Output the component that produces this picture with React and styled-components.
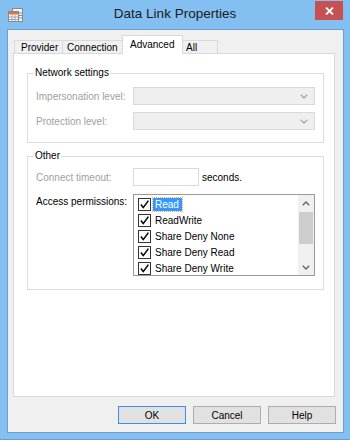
import React from "react";
import styled, { createGlobalStyle } from "styled-components";

const Global = createGlobalStyle`
	body {
		margin: 0;
		font-family: "Liberation Sans", Arial, sans-serif;
	}
	* {
		box-sizing: border-box;
	}
`;

const Window = styled.div`
	width: 350px;
	height: 440px;
	background: #84bff1;
	display: flex;
	flex-direction: column;
	border-bottom: 1px solid #6f9fc9;
`;

const TitleBar = styled.div`
	height: 30px;
	display: grid;
	grid-template-columns: 1fr auto 1fr;
	flex: none;
`;

const TitleIcon = styled.div`
	padding: 8px 0 0 8px;
	line-height: 0;
`;

const Title = styled.div`
	font-size: 13.5px;
	color: #1a1a1a;
	padding-top: 6px;
	line-height: 16px;
`;

const Close = styled.div`
	justify-self: end;
	width: 28px;
	height: 19px;
	margin: 1px 7px 0 0;
	background: #c75050;
	display: flex;
	align-items: center;
	justify-content: center;
`;

const Client = styled.div`
	flex: 1;
	margin: 0 7px 7px 8px;
	background: #f0f0f0;
	outline: 1px solid #6e9fcc;
	padding: 5px 8px 8px 5px;
	display: flex;
	flex-direction: column;
	font-size: 10px;
	color: #000;
`;

const TabRow = styled.div`
	height: 18px;
	display: flex;
	align-items: flex-end;
	padding-left: 1px;
	flex: none;
`;

const Tab = styled.div`
	width: ${(p) => p.$w}px;
	height: ${(p) => (p.$active ? 19 : 13)}px;
	margin-left: ${(p) => (p.$first ? 0 : -1)}px;
	margin-bottom: ${(p) => (p.$active ? -1 : 0)}px;
	border: 1px solid #d9d9d9;
	border-bottom: none;
	background: ${(p) => (p.$active ? "#fff" : "#f0f0f0")};
	display: flex;
	align-items: center;
	padding: 0 0 ${(p) => (p.$active ? 2 : 0)}px ${(p) => p.$pl}px;
	white-space: nowrap;
	position: relative;
	z-index: ${(p) => (p.$active ? 2 : 1)};
`;

const Panel = styled.div`
	height: 344px;
	flex: none;
	background: #fff;
	border: 1px solid #d9d9d9;
	padding: 19px 10px 0 13px;
	display: flex;
	flex-direction: column;
	gap: 13px;
`;

const Group = styled.div`
	border: 1px solid #dcdcdc;
	height: ${(p) => p.$h}px;
	padding: 0 8px;
	display: flex;
	flex-direction: column;
`;

const Legend = styled.div`
	align-self: flex-start;
	background: #fff;
	line-height: 12px;
	height: 12px;
	padding: 0 1px;
	margin: -7px 0 ${(p) => p.$after}px -2px;
`;

const Rows = styled.div`
	display: flex;
	flex-direction: column;
	gap: ${(p) => p.$gap}px;
`;

const Row = styled.div`
	display: grid;
	grid-template-columns: 97px 1fr;
	align-items: ${(p) => (p.$top ? "start" : "center")};
`;

const Label = styled.div`
	color: ${(p) => (p.$disabled ? "#a0a0a0" : "#000")};
	padding-top: ${(p) => (p.$top ? 2 : 0)}px;
`;

const Combo = styled.div`
	height: 18px;
	background: #efefef;
	border: 1px solid #d9d9d9;
	display: flex;
	align-items: center;
	justify-content: flex-end;
	padding-right: 6px;
`;

const Inline = styled.div`
	display: flex;
	align-items: center;
	gap: 3px;
`;

const TextBox = styled.div`
	width: 66px;
	height: 18px;
	background: #fff;
	border: 1px solid #d9d9d9;
`;

const ListBox = styled.div`
	height: 82px;
	border: 1px solid #9a9a9a;
	display: flex;
	background: #fff;
	overflow: hidden;
`;

const List = styled.div`
	flex: 1;
	padding: 1px 0 0 4px;
`;

const Item = styled.div`
	height: 16px;
	display: flex;
	align-items: center;
	gap: 2px;
`;

const Box = styled.div`
	width: 13px;
	height: 13px;
	border: 1px solid #333;
	background: #fff;
	display: flex;
	align-items: center;
	justify-content: center;
	flex: none;
`;

const ItemText = styled.span`
	padding: 0 3px 0 2px;
	line-height: 13px;
	background: ${(p) => (p.$selected ? "#3399ff" : "transparent")};
	color: ${(p) => (p.$selected ? "#fff" : "#000")};
	outline: ${(p) => (p.$selected ? "1px dotted #f7a64c" : "none")};
`;

const ScrollBar = styled.div`
	width: 16px;
	background: #f0f0f0;
	display: flex;
	flex-direction: column;
`;

const Arrow = styled.div`
	height: 16px;
	display: flex;
	align-items: center;
	justify-content: center;
	flex: none;
`;

const Thumb = styled.div`
	height: 32px;
	margin: 1px 1px 0;
	background: #cdcdcd;
`;

const Track = styled.div`
	flex: 1;
`;

const ButtonRow = styled.div`
	display: flex;
	justify-content: flex-end;
	gap: 7px;
	margin: 9px -1px 0 0;
`;

const Button = styled.div`
	width: 68px;
	height: 18px;
	background: #e1e1e1;
	border: 1px solid ${(p) => (p.$default ? "#3c8fe6" : "#adadad")};
	display: flex;
	align-items: center;
	justify-content: center;
`;

const Check = () => (
	<svg width="11" height="11" viewBox="0 0 11 11">
		<path d="M1.8 5.6 L4.3 8.6 L9.4 1.6" fill="none" stroke="#000" strokeWidth="1.5" />
	</svg>
);

const Chevron = ({ up, color = "#606060" }) => (
	<svg width="8" height="5" viewBox="0 0 8 5">
		<path
			d={up ? "M0.8 4.2 L4 1 L7.2 4.2" : "M0.8 0.8 L4 4 L7.2 0.8"}
			fill="none"
			stroke={color}
			strokeWidth="1.3"
		/>
	</svg>
);

const AppIcon = () => (
	<svg width="15" height="15" viewBox="0 0 15 15">
		<rect x="4.5" y="0.5" width="10" height="13" fill="#f4f4f4" stroke="#8a8a8a" />
		<rect x="0.5" y="3.5" width="10" height="10" fill="#fff" stroke="#8a8a8a" />
		<rect x="1" y="4" width="9" height="2.5" fill="#e0733f" />
		<path d="M1 9 H10 M1 11.5 H10 M4 6.5 V13 M7 6.5 V13" stroke="#9aa6b8" strokeWidth="1" />
		<path d="M11 5 H14 M11 7.5 H14 M11 10 H14" stroke="#7a8aa0" strokeWidth="1" />
	</svg>
);

const tabs = [
	{ name: "Provider", w: 49, pl: 6 },
	{ name: "Connection", w: 61, pl: 4 },
	{ name: "Advanced", w: 61, pl: 7, active: true },
	{ name: "All", w: 36, pl: 3 },
];

const perms = ["Read", "ReadWrite", "Share Deny None", "Share Deny Read", "Share Deny Write"];

export default function App() {
	return (
		<>
			<Global />
			<Window>
				<TitleBar>
					<TitleIcon>
						<AppIcon />
					</TitleIcon>
					<Title>Data Link Properties</Title>
					<Close>
						<svg width="9" height="8" viewBox="0 0 9 8">
							<path d="M1 0.5 L8 7.5 M8 0.5 L1 7.5" stroke="#fff" strokeWidth="1.8" />
						</svg>
					</Close>
				</TitleBar>
				<Client>
					<TabRow>
						{tabs.map((t, i) => (
							<Tab key={t.name} $w={t.w} $pl={t.pl} $active={t.active} $first={i === 0}>
								{t.name}
							</Tab>
						))}
					</TabRow>
					<Panel>
						<Group $h={70}>
							<Legend $after={8}>Network settings</Legend>
							<Rows $gap={7}>
								<Row>
									<Label $disabled>Impersonation level:</Label>
									<Combo>
										<Chevron color="#a6a6a6" />
									</Combo>
								</Row>
								<Row>
									<Label $disabled>Protection level:</Label>
									<Combo>
										<Chevron color="#a6a6a6" />
									</Combo>
								</Row>
							</Rows>
						</Group>
						<Group $h={134}>
							<Legend $after={6}>Other</Legend>
							<Rows $gap={8}>
								<Row>
									<Label $disabled>Connect timeout:</Label>
									<Inline>
										<TextBox />
										<span>seconds.</span>
									</Inline>
								</Row>
								<Row $top>
									<Label $top>Access permissions:</Label>
									<ListBox>
										<List>
											{perms.map((p, i) => (
												<Item key={p}>
													<Box>
														<Check />
													</Box>
													<ItemText $selected={i === 0}>{p}</ItemText>
												</Item>
											))}
										</List>
										<ScrollBar>
											<Arrow>
												<Chevron up />
											</Arrow>
											<Thumb />
											<Track />
											<Arrow>
												<Chevron />
											</Arrow>
										</ScrollBar>
									</ListBox>
								</Row>
							</Rows>
						</Group>
					</Panel>
					<ButtonRow>
						<Button $default>OK</Button>
						<Button>Cancel</Button>
						<Button>Help</Button>
					</ButtonRow>
				</Client>
			</Window>
		</>
	);
}
